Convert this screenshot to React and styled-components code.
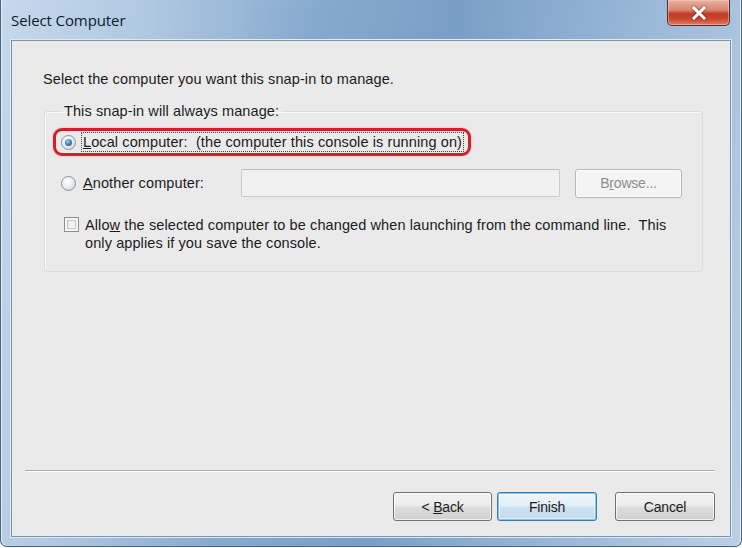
import React from "react";
import styled, { createGlobalStyle, css } from "styled-components";

const GlobalStyle = createGlobalStyle`
  html, body {
    margin: 0;
    padding: 0;
    background: #ffffff;
  }
  body {
    font-family: "Liberation Sans", Arial, sans-serif;
  }
`;

const Window = styled.div`
  box-sizing: border-box;
  width: 742px;
  height: 547px;
  display: flex;
  flex-direction: column;
  border: 1px solid #4b637e;
  border-top: none;
  border-radius: 0 0 7px 7px;
  background: linear-gradient(
    100deg,
    #c6d9ec 0%,
    #b0c8e1 18%,
    #86a9ce 38%,
    #7a9fc6 55%,
    #96b5d6 75%,
    #bbd0e6 100%
  );
  box-shadow: inset 1px 0 0 #e4eef8, inset -1px 0 0 #e4eef8;
`;

const TitleBar = styled.div`
  height: 40px;
  flex: none;
  display: flex;
  justify-content: space-between;
  align-items: flex-start;
  padding: 0 11px 0 10px;
`;

const Title = styled.div`
  font-family: "Open Sans", "Noto Sans", sans-serif;
  font-size: 15px;
  line-height: 18px;
  color: #0b1a2a;
  margin-top: 11px;
  letter-spacing: -0.1px;
`;

const CloseButton = styled.div`
  width: 63px;
  height: 26px;
  box-sizing: border-box;
  border: 1px solid #5b2a26;
  border-top: none;
  border-radius: 0 0 5px 5px;
  background: linear-gradient(
    180deg,
    #e9b0a2 0%,
    #d98672 40%,
    #c23a24 55%,
    #c9462d 75%,
    #e07b62 100%
  );
  display: flex;
  align-items: center;
  justify-content: center;
  box-shadow: inset 0 0 0 1px rgba(255, 220, 210, 0.45);
  svg {
    filter: drop-shadow(0 0 1px rgba(80, 10, 0, 0.8));
  }
`;

const Client = styled.div`
  flex: 1;
  margin: 0 10px 9px 10px;
  border: 1px solid #8094ab;
  background: #ebeaea;
  display: flex;
  flex-direction: column;
  color: #1b1b1b;
  font-size: 14.5px;
  letter-spacing: 0.1px;
  box-shadow: 0 0 0 1px #dce8f4;
`;

const Body = styled.div`
  flex: 1;
  padding: 29px 28px 0 31px;
`;

const Intro = styled.div`
  line-height: 18px;
`;

const GroupBox = styled.fieldset`
  margin: 14px 0 0 1px;
  width: 659px;
  height: 170px;
  box-sizing: border-box;
  border: 1px solid #d8dde2;
  border-radius: 3px;
  padding: 8px 0 0 8px;
  box-shadow: inset 1px 1px 0 #fafafa;
`;

const Legend = styled.legend`
  margin-left: 8px;
  padding: 0 3px;
  line-height: 18px;
`;

const RadioRow = styled.div`
  display: flex;
  align-items: center;
  width: 418px;
  height: 28px;
  box-sizing: border-box;
  padding-left: 5px;
  border: 3px solid transparent;
  border-radius: 9px;
  ${(p) =>
    p.$highlight &&
    css`
      border-color: #d21f2c;
      box-shadow: 0 0 2px rgba(210, 31, 44, 0.4);
    `}
  & + & {
    margin-top: 13px;
    width: auto;
  }
`;

const Radio = styled.span`
  width: 15px;
  height: 15px;
  flex: none;
  box-sizing: border-box;
  border-radius: 50%;
  border: 1px solid #8b9299;
  background: radial-gradient(circle at 40% 35%, #ffffff 0%, #eceef0 45%, #c9cdd1 100%);
  display: flex;
  align-items: center;
  justify-content: center;
  &::after {
    content: "";
    width: 7px;
    height: 7px;
    border-radius: 50%;
    background: ${(p) =>
      p.$checked
        ? "radial-gradient(circle at 40% 35%, #a9d4f5 0%, #3b86c8 45%, #1a4e86 100%)"
        : "transparent"};
  }
`;

const RadioLabel = styled.span`
  margin-left: 7px;
  line-height: 16px;
  white-space: pre;
  ${(p) =>
    p.$focused &&
    css`
      outline: 1px dotted #444;
      outline-offset: 1px;
    `}
  ${(p) =>
    p.$width &&
    css`
      width: ${p.$width}px;
    `}
`;

const TextInput = styled.div`
  width: 319px;
  height: 28px;
  box-sizing: border-box;
  border: 1px solid #c9cdd2;
  border-top-color: #b9bec4;
  border-radius: 2px;
  background: #f1f1f1;
`;

const Button = styled.div`
  width: ${(p) => p.$width || 100}px;
  height: 29px;
  box-sizing: border-box;
  border: 1px solid ${(p) => (p.$default ? "#3d7ba8" : p.$disabled ? "#b7b7b7" : "#717171")};
  border-radius: 3px;
  display: flex;
  align-items: center;
  justify-content: center;
  font-size: 14px;
  letter-spacing: -0.2px;
  white-space: pre;
  color: ${(p) => (p.$disabled ? "#8d8d8d" : "#1b1b1b")};
  background: ${(p) =>
    p.$disabled
      ? "#f4f4f4"
      : p.$default
      ? "linear-gradient(180deg, #edf5fb 0%, #e3eef7 48%, #cde2f2 52%, #c3dbee 100%)"
      : "linear-gradient(180deg, #f3f3f3 0%, #ebebeb 48%, #dddddd 52%, #d0d0d0 100%)"};
  box-shadow: ${(p) =>
    p.$default
      ? "inset 0 0 0 1px #7fc6e8, inset 0 0 0 2px rgba(255,255,255,0.5)"
      : "inset 0 0 0 1px rgba(255,255,255,0.75)"};
`;

const Browse = styled(Button)`
  margin-left: 15px;
`;

const CheckRow = styled.label`
  display: flex;
  align-items: flex-start;
  margin-top: 19px;
  padding-left: 11px;
`;

const Checkbox = styled.span`
  width: 15px;
  height: 15px;
  flex: none;
  margin-top: 1px;
  box-sizing: border-box;
  border: 1px solid #8e8f8f;
  background: linear-gradient(135deg, #e0e0e0 0%, #f4f4f4 60%, #ffffff 100%);
  box-shadow: inset 0 0 0 2px #f6f6f6, inset 0 0 0 3px #c6c6c6;
`;

const CheckText = styled.span`
  margin-left: 6px;
  line-height: 18px;
  white-space: pre;
`;

const Footer = styled.div`
  padding: 0 15px 15px 13px;
`;

const Separator = styled.div`
  height: 1px;
  background: #a8a8a8;
  box-shadow: 0 1px 0 #ffffff;
`;

const ButtonRow = styled.div`
  display: flex;
  justify-content: flex-end;
  margin-top: 21px;
  gap: 5px;
  & > :last-child {
    margin-left: 13px;
  }
`;

const App = () => {
  return (
    <>
      <GlobalStyle />
      <Window>
        <TitleBar>
          <Title>Select Computer</Title>
          <CloseButton>
            <svg width="16" height="14" viewBox="0 0 16 14">
              <path d="M3 2 L13 12 M13 2 L3 12" stroke="#ffffff" strokeWidth="3" strokeLinecap="square" />
            </svg>
          </CloseButton>
        </TitleBar>
        <Client>
          <Body>
            <Intro>Select the computer you want this snap-in to manage.</Intro>
            <GroupBox>
              <Legend>This snap-in will always manage:</Legend>
              <RadioRow $highlight>
                <Radio $checked />
                <RadioLabel $focused>
                  <u>L</u>
                  {"ocal computer:  (the computer this console is running on)"}
                </RadioLabel>
              </RadioRow>
              <RadioRow>
                <Radio />
                <RadioLabel $width={158}>
                  <u>A</u>
                  {"nother computer:"}
                </RadioLabel>
                <TextInput />
                <Browse $disabled $width={107}>
                  {"B"}
                  <u>r</u>
                  {"owse..."}
                </Browse>
              </RadioRow>
              <CheckRow>
                <Checkbox />
                <CheckText>
                  {"Allo"}
                  <u>w</u>
                  {" the selected computer to be changed when launching from the command line.  This\nonly applies if you save the console."}
                </CheckText>
              </CheckRow>
            </GroupBox>
          </Body>
          <Footer>
            <Separator />
            <ButtonRow>
              <Button $width={99}>
                {"< "}
                <u>B</u>
                {"ack"}
              </Button>
              <Button $default>Finish</Button>
              <Button>Cancel</Button>
            </ButtonRow>
          </Footer>
        </Client>
      </Window>
    </>
  );
};

export default App;
